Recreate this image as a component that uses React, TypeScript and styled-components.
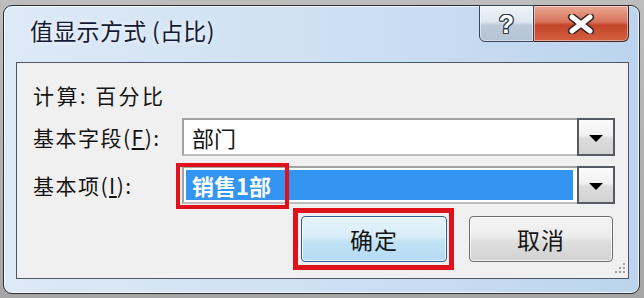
import React from "react";
import styled, { createGlobalStyle } from "styled-components";

const GlobalStyle = createGlobalStyle`
  html, body {
    margin: 0;
    padding: 0;
  }
  body {
    width: 644px;
    height: 298px;
    overflow: hidden;
    background: #a9a9a9;
    font-family: "Noto Sans CJK SC", "Microsoft YaHei", sans-serif;
  }
`;

const Desktop = styled.div`
  width: 644px;
  height: 298px;
  box-sizing: border-box;
  padding: 5px 0 0 3px;
  background: linear-gradient(180deg, #bdbdbd 0%, #a6a6a6 100%);
`;

const Window = styled.div`
  width: 637px;
  height: 289px;
  box-sizing: border-box;
  border: 1px solid #2a2f37;
  border-radius: 9px;
  padding: 0 10px 14px 12px;
  display: flex;
  flex-direction: column;
  background: linear-gradient(90deg, #dde9f6 0%, #d0e1f3 45%, #bcd4ee 100%);
  box-shadow: inset 0 0 0 1px rgba(255, 255, 255, 0.75);
`;

const TitleBar = styled.div`
  height: 56px;
  display: flex;
  align-items: flex-start;
  justify-content: space-between;
`;

const Title = styled.div`
  margin: 9px 0 0 14px;
  font-size: 23px;
  line-height: 30px;
  letter-spacing: 0.3px;
  color: #141a33;
  text-shadow: 0 0 6px rgba(255, 255, 255, 0.95);
`;

const Captions = styled.div`
  display: flex;
  height: 37px;
  margin-top: -1px;
`;

const CaptionButton = styled.div<{ $kind: "help" | "close" }>`
  width: ${(p) => (p.$kind === "help" ? 55 : 95)}px;
  box-sizing: border-box;
  display: flex;
  align-items: center;
  justify-content: center;
  border: 1px solid ${(p) => (p.$kind === "help" ? "#34465c" : "#3d2622")};
  border-left-width: ${(p) => (p.$kind === "help" ? 1 : 0)}px;
  border-radius: ${(p) => (p.$kind === "help" ? "0 0 0 6px" : "0 0 6px 0")};
  background: ${(p) =>
    p.$kind === "help"
      ? "linear-gradient(180deg, #f0f4f8 0%, #dfe6ee 45%, #bccad9 55%, #b4c3d4 100%)"
      : "linear-gradient(180deg, #eaa893 0%, #d7745c 45%, #c4452b 55%, #d4603f 100%)"};
  box-shadow: inset 0 0 0 1px rgba(255, 255, 255, 0.45);
`;

const HelpGlyph = styled.span`
  font-family: "Liberation Sans", Arial, sans-serif;
  font-weight: bold;
  font-size: 25px;
  line-height: 1;
  color: #ffffff;
  margin-top: 1px;
  text-shadow: 1px 0 #2e3846, -1px 0 #2e3846, 0 1px #2e3846, 0 -1px #2e3846,
    1px 1px #2e3846, -1px -1px #2e3846, 1px -1px #2e3846, -1px 1px #2e3846;
`;

const Client = styled.div`
  flex: 1;
  position: relative;
  display: flex;
  flex-direction: column;
  border: 1px solid #4d5866;
  background: #f0f0f0;
  padding: 19px 13px 0 16px;
  color: #141414;
`;

const CalcLine = styled.div`
  font-size: 21px;
  line-height: 26px;
  letter-spacing: 2.4px;
`;

const FieldGrid = styled.div`
  margin-top: 10px;
  display: grid;
  grid-template-columns: 149px 433px;
  row-gap: 10px;
  align-items: center;
`;

const Label = styled.div`
  font-size: 21px;
  line-height: 26px;
  letter-spacing: 1.5px;
`;

const Key = styled.span`
  text-decoration: underline;
  text-underline-offset: 2px;
`;

const Combo = styled.div`
  display: flex;
  height: 38px;
`;

const ComboField = styled.div`
  flex: 1;
  position: relative;
  display: flex;
  box-sizing: border-box;
  padding: 2px 4px 2px 2px;
  background: #ffffff;
  border: 2px solid #a2a2a2;
  border-bottom-color: #bdbdbd;
  border-right: none;
`;

const FieldText = styled.div<{ $selected?: boolean }>`
  flex: 1;
  padding-left: 6px;
  font-size: 22px;
  line-height: 30px;
  font-weight: ${(p) => (p.$selected ? "bold" : "normal")};
  color: ${(p) => (p.$selected ? "#ffffff" : "#141414")};
  background: ${(p) => (p.$selected ? "#3394f2" : "transparent")};
`;

const DropButton = styled.div`
  width: 38px;
  box-sizing: border-box;
  border: 2px solid #555a60;
  display: flex;
  align-items: center;
  justify-content: center;
  background: linear-gradient(180deg, #fbfbfb 0%, #f1f1f1 45%, #dcdcdc 55%, #d3d3d3 100%);
`;

const Arrow = styled.div`
  width: 0;
  height: 0;
  margin-top: 2px;
  border-left: 7px solid transparent;
  border-right: 7px solid transparent;
  border-top: 7px solid #000000;
`;

const Mark = styled.div<{ $w: number }>`
  position: absolute;
  pointer-events: none;
  box-sizing: border-box;
  border: ${(p) => p.$w}px solid #e0111b;
`;

const FieldMark = styled(Mark)`
  left: -8px;
  top: -5px;
  bottom: -7px;
  width: 113px;
`;

const ButtonRow = styled.div`
  margin-top: 12px;
  padding-right: 2px;
  display: flex;
  justify-content: flex-end;
  gap: 22px;
`;

const ButtonWrap = styled.div`
  position: relative;
`;

const Button = styled.div<{ $primary?: boolean }>`
  width: ${(p) => (p.$primary ? 146 : 144)}px;
  height: 46px;
  box-sizing: border-box;
  display: flex;
  align-items: center;
  justify-content: center;
  font-size: 23px;
  letter-spacing: 1px;
  color: #141414;
  border-radius: 4px;
  border: 1px solid ${(p) => (p.$primary ? "#2f5f92" : "#6f6f6f")};
  background: ${(p) =>
    p.$primary
      ? "linear-gradient(180deg, #e6f3fb 0%, #d8edf9 45%, #c3e3f6 55%, #b4dbf2 100%)"
      : "linear-gradient(180deg, #f4f4f4 0%, #ececec 45%, #dedede 55%, #d2d2d2 100%)"};
  box-shadow: inset 0 0 0 1px rgba(255, 255, 255, 0.7);
`;

const ButtonMark = styled(Mark)`
  left: -8px;
  right: -7px;
  top: -8px;
  bottom: -8px;
`;

const Grip = styled.svg`
  position: absolute;
  right: 3px;
  bottom: 3px;
`;

const App = () => {
  return (
    <Desktop>
      <GlobalStyle />
      <Window>
        <TitleBar>
          <Title>值显示方式 (占比)</Title>
          <Captions>
            <CaptionButton $kind="help">
              <HelpGlyph>?</HelpGlyph>
            </CaptionButton>
            <CaptionButton $kind="close">
              <svg width="30" height="20" viewBox="0 0 30 20">
                <path d="M6 3 L24 17 M24 3 L6 17" stroke="#3a2624" strokeWidth="8" strokeLinecap="round" />
                <path d="M6 3 L24 17 M24 3 L6 17" stroke="#ffffff" strokeWidth="5" strokeLinecap="round" />
              </svg>
            </CaptionButton>
          </Captions>
        </TitleBar>
        <Client>
          <CalcLine>计算: 百分比</CalcLine>
          <FieldGrid>
            <Label>
              基本字段(<Key>F</Key>):
            </Label>
            <Combo>
              <ComboField>
                <FieldText>部门</FieldText>
              </ComboField>
              <DropButton>
                <Arrow />
              </DropButton>
            </Combo>
            <Label>
              基本项(<Key>I</Key>):
            </Label>
            <Combo>
              <ComboField>
                <FieldText $selected>销售1部</FieldText>
                <FieldMark $w={4} />
              </ComboField>
              <DropButton>
                <Arrow />
              </DropButton>
            </Combo>
          </FieldGrid>
          <ButtonRow>
            <ButtonWrap>
              <Button $primary>确定</Button>
              <ButtonMark $w={5} />
            </ButtonWrap>
            <Button>取消</Button>
          </ButtonRow>
          <Grip width="12" height="14" viewBox="0 0 12 14">
            {[
              [10, 2],
              [10, 6],
              [6, 6],
              [10, 10],
              [6, 10],
              [2, 10],
            ].map(([x, y]) => (
              <rect key={`${x}-${y}`} x={x} y={y} width="2" height="2" fill="#a0a0a0" />
            ))}
          </Grip>
        </Client>
      </Window>
    </Desktop>
  );
};

export default App;
